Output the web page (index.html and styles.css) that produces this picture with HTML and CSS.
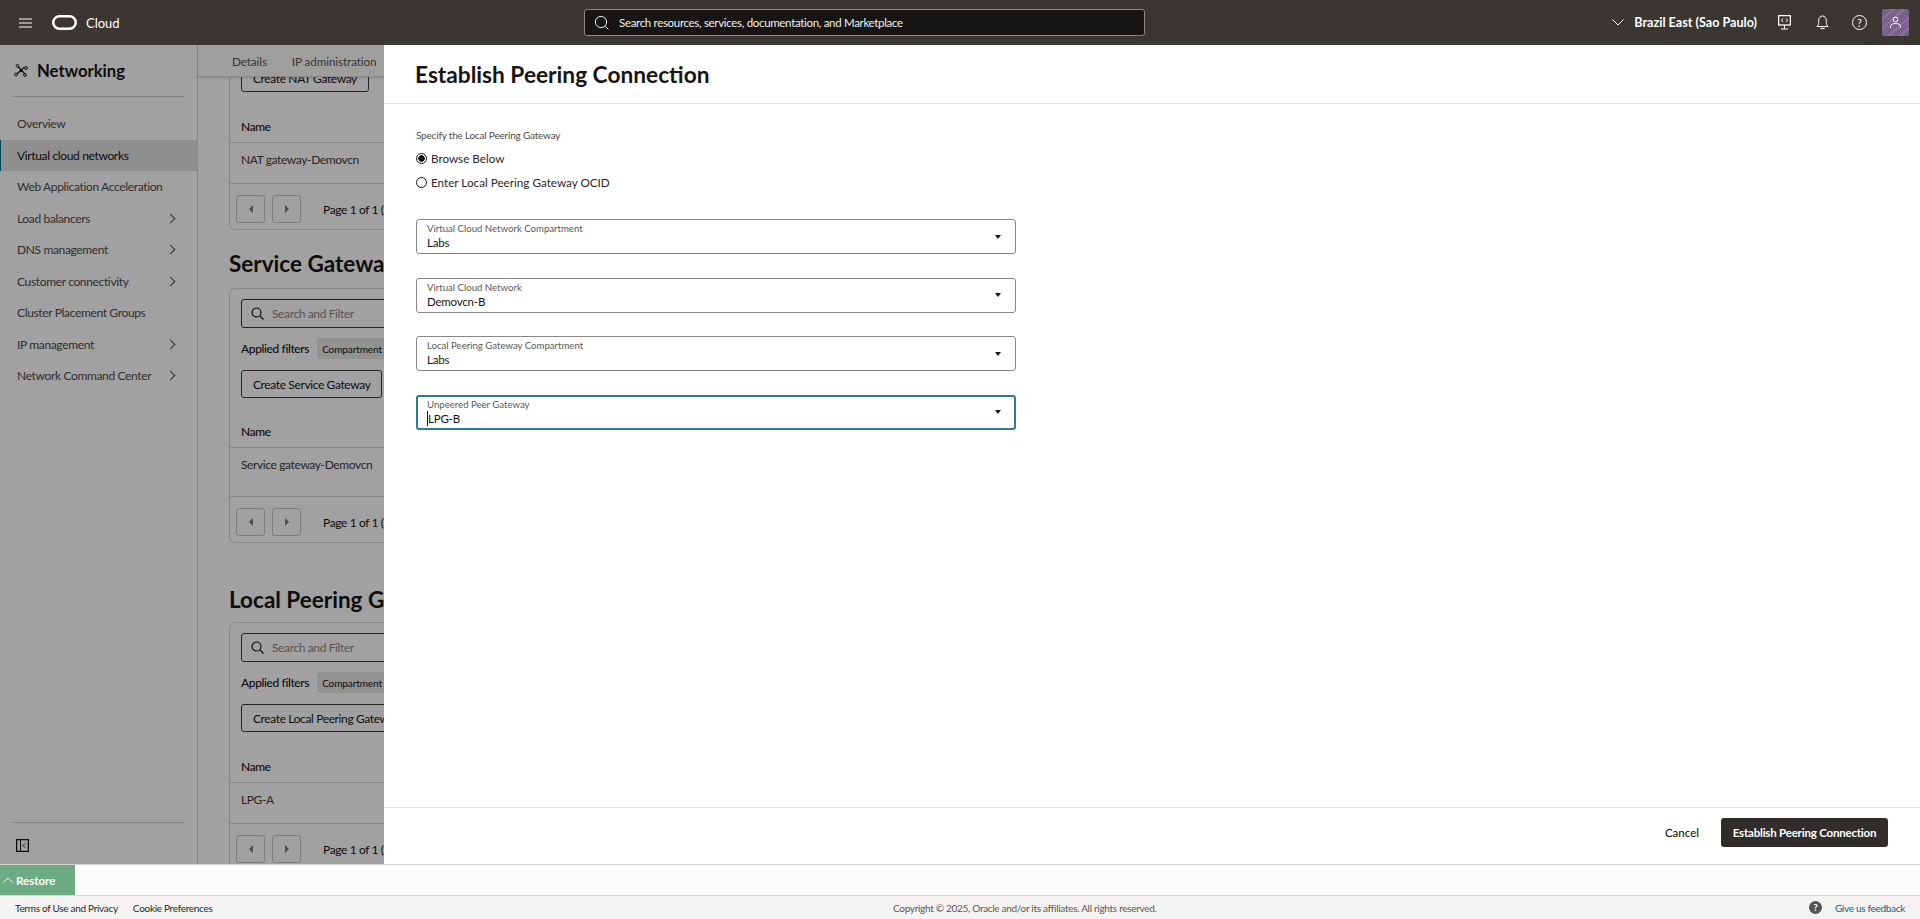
FILE: index.html
```html
<!DOCTYPE html>
<html lang="en">
  <head>
    <meta charset="UTF-8" />
    <meta name="viewport" content="width=device-width, initial-scale=1.0" />
    <title>Establish Peering Connection</title>
    <link rel="stylesheet" href="styles.css">
  </head>
  <body>

    <header class="topbar">
      <svg class="hamburger" width="13" height="10" viewBox="0 0 13 10"><path d="M0 1h13M0 5h13M0 9h13" stroke="#fff" stroke-width="1.2"/></svg>
      <svg class="logo" width="25" height="15" viewBox="0 0 25 15"><rect x="1.25" y="1.25" width="22.5" height="12.5" rx="6.25" fill="none" stroke="#fff" stroke-width="2.5"/></svg>
      <span class="cloud">Cloud</span>
      <div class="global-search">
        <svg width="16" height="16" viewBox="0 0 16 16"><circle cx="7" cy="7" r="5.6" fill="none" stroke="#e8e8e8" stroke-width="1"/><path d="M11 11l3.5 3.5" stroke="#e8e8e8" stroke-width="1"/></svg>
        <span>Search resources, services, documentation, and Marketplace</span>
      </div>
      <div class="top-right">
        <svg class="region-arrow" width="12" height="7" viewBox="0 0 12 7"><path d="M0.5 0.5L6 6l5.500-5.500" fill="none" stroke="#fff" stroke-width="1"/></svg>
        <span class="region">Brazil East (Sao Paulo)</span>
        <svg class="top-icon-cloudshell" width="13" height="15" viewBox="0 0 13 15"><rect x="0.6" y="0.6" width="11.800" height="9.400" fill="none" stroke="#fff" stroke-width="1.300"/><path d="M5 3.500L3.500 5.200 5 7M8 3.500l1.500 1.700L8 7M6.500 10v3.500M3 14h7" fill="none" stroke="#fff"/></svg>
        <svg class="top-icon-bell" width="13" height="15" viewBox="0 0 13 15"><path d="M0.8 11.5h11.4c-1.4-1-1.9-2.2-1.9-4.2V5.4C10.3 3 8.6 1 6.5 1S2.7 3 2.7 5.4v1.9c0 2-.5 3.200-1.900 4.200z" fill="none" stroke="#fff"/><path d="M4.500 13.500h4" stroke="#fff" stroke-width="1.300"/></svg>
        <span class="top-help">?</span>
        <div class="avatar">
          <svg width="27" height="27" viewBox="0 0 27 27">
            <path d="M-2 12L14-2M-2 22L24-2M4 29L29 7M16 29L29 17" stroke="#8c749f" stroke-width="2"/>
            <circle cx="13.500" cy="10.500" r="2.400" fill="none" stroke="#fff"/>
            <path d="M8.500 19v-1.500c0-2 2-3 5-3s5 1 5 3V19" fill="none" stroke="#fff"/>
          </svg>
        </div>
      </div>
    </header>

    <div class="app">
      <aside class="sidebar">
        <div class="sidebar-head">
          <svg width="14" height="13" viewBox="0 0 14 13"><path d="M4 2.500l7.500 8M10.500 3L3 10" stroke="#161513" stroke-width="1.100"/><circle cx="7" cy="6.500" r="1.600" fill="#161513"/><circle cx="3.500" cy="1.800" r="1.400" fill="#fff" stroke="#161513"/><circle cx="12" cy="4" r="1.400" fill="#fff" stroke="#161513"/><circle cx="2" cy="10.500" r="1.400" fill="#fff" stroke="#161513"/><circle cx="11" cy="11" r="1.400" fill="#fff" stroke="#161513"/></svg>
          <span>Networking</span>
        </div>
        <nav class="side-nav">
          <a class="side-item">Overview</a>
          <a class="side-item selected">Virtual cloud networks</a>
          <a class="side-item">Web Application Acceleration</a>
          <a class="side-item">Load balancers<i class="chev"></i></a>
          <a class="side-item">DNS management<i class="chev"></i></a>
          <a class="side-item">Customer connectivity<i class="chev"></i></a>
          <a class="side-item">Cluster Placement Groups</a>
          <a class="side-item">IP management<i class="chev"></i></a>
          <a class="side-item">Network Command Center<i class="chev"></i></a>
        </nav>
        <div class="side-bottom">
          <svg width="13" height="13" viewBox="0 0 13 13"><rect x="0.600" y="0.600" width="11.800" height="11.800" fill="none" stroke="#161513" stroke-width="1.300"/><path d="M4.500 0.500v12" stroke="#161513"/><path d="M9 4.500L7 6.500l2 2" fill="none" stroke="#161513"/></svg>
        </div>
      </aside>

      <main class="content">
        <div class="tabs">
          <span>Details</span>
          <span>IP administration</span>
        </div>
        <div class="scroller">
          <div class="scrolled">
            <section class="card card-cut">
              <button class="btn">Create NAT Gateway</button>
              <div class="table-head">Name</div>
              <div class="table-row">NAT gateway-Demovcn</div>
              <div class="pager">
                <span class="page-btn"><i class="tri-left"></i></span>
                <span class="page-btn"><i class="tri-right"></i></span>
                <span class="page-text">Page 1 of 1 (1 of 1 items)</span>
              </div>
            </section>

            <h2 class="section-title title-service">Service Gateways</h2>
            <section class="card">
              <div class="filter-box">
                <svg width="13" height="13" viewBox="0 0 13 13"><circle cx="5.500" cy="5.500" r="4.500" fill="none" stroke="#161513" stroke-width="1.200"/><path d="M9 9l3.500 3.500" stroke="#161513" stroke-width="1.200"/></svg>
                <span>Search and Filter</span>
              </div>
              <div class="applied"><b>Applied filters</b><span class="chip">Compartment <u>Labs</u></span></div>
              <button class="btn">Create Service Gateway</button>
              <div class="table-head">Name</div>
              <div class="table-row tall">Service gateway-Demovcn</div>
              <div class="pager">
                <span class="page-btn"><i class="tri-left"></i></span>
                <span class="page-btn"><i class="tri-right"></i></span>
                <span class="page-text">Page 1 of 1 (1 of 1 items)</span>
              </div>
            </section>

            <h2 class="section-title title-local">Local Peering Gateways</h2>
            <section class="card">
              <div class="filter-box">
                <svg width="13" height="13" viewBox="0 0 13 13"><circle cx="5.500" cy="5.500" r="4.500" fill="none" stroke="#161513" stroke-width="1.200"/><path d="M9 9l3.500 3.500" stroke="#161513" stroke-width="1.200"/></svg>
                <span>Search and Filter</span>
              </div>
              <div class="applied"><b>Applied filters</b><span class="chip">Compartment <u>Labs</u></span></div>
              <button class="btn">Create Local Peering Gateway</button>
              <div class="table-head">Name</div>
              <div class="table-row">LPG-A</div>
              <div class="pager">
                <span class="page-btn"><i class="tri-left"></i></span>
                <span class="page-btn"><i class="tri-right"></i></span>
                <span class="page-text">Page 1 of 1 (1 of 1 items)</span>
              </div>
            </section>
          </div>
        </div>
      </main>

      <div class="scrim"></div>

      <div class="panel">
        <div class="panel-head"><h1>Establish Peering Connection</h1></div>
        <div class="panel-body">
          <p class="group-label">Specify the Local Peering Gateway</p>
          <label class="radio-row"><i class="radio checked"></i>Browse Below</label>
          <label class="radio-row"><i class="radio"></i>Enter Local Peering Gateway OCID</label>

          <div class="field first">
            <div class="field-text"><small>Virtual Cloud Network Compartment</small><span>Labs</span></div>
            <i class="caret"></i>
          </div>
          <div class="field">
            <div class="field-text"><small>Virtual Cloud Network</small><span>Demovcn-B</span></div>
            <i class="caret"></i>
          </div>
          <div class="field">
            <div class="field-text"><small>Local Peering Gateway Compartment</small><span>Labs</span></div>
            <i class="caret"></i>
          </div>
          <div class="field focused">
            <div class="field-text"><small>Unpeered Peer Gateway</small><span class="with-cursor">LPG-B</span></div>
            <i class="caret"></i>
          </div>
        </div>
        <div class="panel-foot">
          <a class="cancel">Cancel</a>
          <button class="btn-primary">Establish Peering Connection</button>
        </div>
      </div>
    </div>

    <div class="restore-bar">
      <div class="restore">
        <svg width="10" height="6" viewBox="0 0 10 6"><path d="M0.500 5.500L5 1l4.500 4.500" fill="none" stroke="#fff" stroke-width="1"/></svg>
        <span>Restore</span>
      </div>
    </div>

    <footer class="footer">
      <div class="foot-links"><a>Terms of Use and Privacy</a><a>Cookie Preferences</a></div>
      <div class="foot-copy">Copyright © 2025, Oracle and/or its affiliates. All rights reserved.</div>
      <div class="foot-right"><span class="foot-help">?</span><a>Give us feedback</a></div>
    </footer>

  </body>
</html>
```
FILE: styles.css
```css
* {
  box-sizing: border-box;
}

body {
  margin: 0;
  height: 100vh;
  display: flex;
  flex-direction: column;
  overflow: hidden;
  font-family: Lato, "Open Sans", Arial, sans-serif;
  color: #161513;
  background: #fff;
}

/* top bar */
.topbar {
  height: 45px;
  flex: none;
  display: flex;
  align-items: center;
  position: relative;
  background: #3a3632;
  color: #fff;
}
.hamburger {
  margin-left: 19px;
}
.logo {
  margin-left: 20px;
}
.cloud {
  margin-left: 9px;
  font-size: 13px;
}
.global-search {
  position: absolute;
  left: 584px;
  top: 9px;
  width: 561px;
  height: 27px;
  display: flex;
  align-items: center;
  gap: 9px;
  padding-left: 9px;
  background: #161513;
  border: 1px solid #8a8986;
  border-radius: 3px;
  font-size: 11.5px;
  letter-spacing: -0.32px;
  color: #f0f0f0;
}
.top-right {
  margin-left: auto;
  display: flex;
  align-items: center;
  padding-right: 11px;
}
.region {
  margin-left: 10px;
  font-size: 12.6px;
  font-weight: 700;
}
.top-icon-cloudshell {
  margin-left: 21px;
}
.top-icon-bell {
  margin-left: 25px;
}
.top-help {
  margin-left: 23px;
  width: 15px;
  height: 15px;
  border: 1px solid #fff;
  border-radius: 50%;
  font-size: 11px;
  line-height: 13px;
  text-align: center;
}
.avatar {
  margin-left: 15px;
  width: 27px;
  height: 27px;
  border-radius: 2px;
  overflow: hidden;
  background: #7a6189;
}
.avatar svg {
  display: block;
}

/* page behind the panel */
.app {
  flex: 1;
  min-height: 0;
  display: flex;
  position: relative;
  overflow: hidden;
}
.sidebar {
  width: 198px;
  flex: none;
  display: flex;
  flex-direction: column;
  background: #fff;
  border-right: 1px solid #dcdbd9;
}
.sidebar-head {
  height: 52px;
  margin: 0 13px;
  padding-left: 1px;
  display: flex;
  align-items: center;
  gap: 9px;
  border-bottom: 1px solid #d0cfcd;
  font-size: 16.7px;
  font-weight: 700;
}
.side-nav {
  padding-top: 11px;
  font-size: 12px;
  letter-spacing: -0.35px;
  color: #4f4c49;
}
.side-item {
  height: 31.5px;
  display: flex;
  align-items: center;
  justify-content: space-between;
  padding: 0 23px 0 17px;
  white-space: nowrap;
}
.side-item.selected {
  color: #161513;
  background: #e4e3e2;
  box-shadow: inset 1px 0 0 #006b8f;
}
.chev {
  width: 7px;
  height: 7px;
  border-top: 1.2px solid #4f4c49;
  border-right: 1.2px solid #4f4c49;
  transform: rotate(45deg);
}
.side-bottom {
  margin: auto 13px 0;
  height: 42px;
  padding: 16px 0 0 3px;
  border-top: 1px solid #d0cfcd;
}
.side-bottom svg {
  display: block;
}

.content {
  flex: 1;
  min-width: 0;
  display: flex;
  flex-direction: column;
}
.tabs {
  height: 32px;
  flex: none;
  display: flex;
  gap: 25px;
  align-items: center;
  padding: 0 0 0 34px;
  font-size: 11.7px;
  letter-spacing: -0.1px;
  color: #5b5855;
  background: #fbfaf9;
  border-bottom: 1px solid #dcdbd9;
  box-shadow: 0 1px 3px rgba(0, 0, 0, 0.15);
  position: relative;
}
.scroller {
  flex: 1;
  overflow: hidden;
  padding-left: 31px;
  font-size: 12px;
  letter-spacing: -0.38px;
}
.scrolled {
  margin-top: -13px;
  width: 800px;
}
.card {
  border: 1px solid #d9d8d6;
  border-radius: 6px;
  padding-top: 10px;
}
.card-cut {
  border-top: 0;
  padding-top: 0;
  border-radius: 0 0 6px 6px;
}
.section-title {
  height: 30px;
  margin: 19px 0 9px;
  font-size: 22.5px;
  line-height: 30px;
  font-weight: 700;
  letter-spacing: 0;
}
.title-local {
  margin: 42px 0 7px;
}
.btn {
  display: block;
  margin-left: 11px;
  height: 28px;
  padding: 0 11px;
  font: inherit;
  letter-spacing: inherit;
  color: #161513;
  background: transparent;
  border: 1px solid #3f3c39;
  border-radius: 3px;
}
.filter-box {
  height: 29px;
  margin-left: 11px;
  display: flex;
  align-items: center;
  gap: 8px;
  padding-left: 9px;
  border: 1px solid #3f3c39;
  border-radius: 3px;
  color: #8a8886;
}
.applied {
  height: 21px;
  margin: 10px 0 11px 11px;
  display: flex;
  align-items: center;
  gap: 8px;
}
.applied b {
  font-weight: 500;
}
.chip {
  height: 21px;
  padding: 0 5px;
  display: flex;
  align-items: center;
  gap: 3px;
  font-size: 10px;
  letter-spacing: -0.1px;
  background: #e8e7e6;
  border-radius: 4px;
}
.table-head {
  height: 50px;
  padding: 25px 0 0 11px;
  line-height: 18px;
  font-weight: 500;
  border-bottom: 1px solid #d9d8d6;
}
.card-cut .table-head {
  height: 51px;
  padding-top: 26px;
}
.title-local + .card .table-head {
  height: 51px;
  padding-top: 26px;
}
.table-row {
  height: 41px;
  padding: 8px 0 0 11px;
  line-height: 18px;
  color: #3f3c39;
  border-bottom: 1px solid #d9d8d6;
}
.table-row.tall {
  height: 49px;
}
.pager {
  height: 45px;
  padding: 11px 0 0 6px;
  display: flex;
  align-items: flex-start;
  gap: 7px;
}
.page-btn {
  width: 29px;
  height: 28px;
  display: flex;
  align-items: center;
  justify-content: center;
  border: 1px solid #c9c8c6;
  border-radius: 3px;
}
.tri-left,
.tri-right {
  border-top: 4px solid transparent;
  border-bottom: 4px solid transparent;
}
.tri-left {
  border-right: 4px solid #7d7b79;
}
.tri-right {
  border-left: 4px solid #7d7b79;
}
.page-text {
  margin-left: 15px;
  line-height: 30px;
  white-space: nowrap;
}

/* dim layer and slide-in panel */
.scrim {
  position: absolute;
  inset: 0;
  background: rgba(0, 0, 0, 0.37);
}
.panel {
  position: absolute;
  left: 384px;
  top: 0;
  right: 0;
  bottom: 0;
  display: flex;
  flex-direction: column;
  background: #fff;
}
.panel-head {
  height: 59px;
  flex: none;
  padding-left: 31px;
  border-bottom: 1px solid #e4e3e2;
}
.panel-head h1 {
  margin: 0;
  font-size: 22.7px;
  line-height: 59px;
  font-weight: 700;
}
.panel-body {
  flex: 1;
  padding: 24px 0 0 32px;
}
.group-label {
  margin: 0;
  font-size: 10px;
  letter-spacing: -0.2px;
  line-height: 14px;
  color: #4f4c49;
}
.radio-row {
  display: flex;
  align-items: center;
  gap: 4px;
  height: 24px;
  font-size: 11.7px;
  color: #2b2926;
}
.group-label + .radio-row {
  margin-top: 4px;
}
.radio {
  width: 11px;
  height: 11px;
  border: 1px solid #161513;
  border-radius: 50%;
}
.radio.checked {
  background: radial-gradient(circle, #161513 0 3px, #fff 3.5px);
}
.field {
  width: 600px;
  height: 35px;
  margin-bottom: 23.67px;
  display: flex;
  align-items: center;
  justify-content: space-between;
  padding: 0 14px 0 10px;
  border: 1px solid #8a8886;
  border-radius: 3px;
}
.field.first {
  margin-top: 25px;
}
.field.focused {
  border: 2px solid #2e7b96;
  padding: 0 13px 0 9px;
}
.field-text {
  display: flex;
  flex-direction: column;
}
.field-text small {
  font-size: 9.6px;
  line-height: 12px;
  color: #5b5855;
}
.field-text span {
  font-size: 11.5px;
  letter-spacing: -0.2px;
  line-height: 15px;
}
.with-cursor {
  border-left: 1px solid #161513;
  margin-left: 0;
}
.caret {
  border-left: 3.5px solid transparent;
  border-right: 3.5px solid transparent;
  border-top: 4px solid #161513;
}
.panel-foot {
  height: 57px;
  flex: none;
  display: flex;
  align-items: center;
  justify-content: flex-end;
  gap: 22px;
  padding: 0 32px 7px 0;
  border-top: 1px solid #e4e3e2;
}
.cancel {
  font-size: 11.5px;
  font-weight: 500;
}
.btn-primary {
  width: 167px;
  height: 29px;
  padding: 0;
  font: inherit;
  font-size: 11.5px;
  letter-spacing: -0.2px;
  font-weight: 700;
  color: #fff;
  background: #312d2a;
  border: 0;
  border-radius: 3px;
}

/* bottom bars */
.restore-bar {
  height: 31px;
  flex: none;
  background: #fbfbfa;
  border-top: 1px solid #d0cfcd;
}
.restore {
  width: 75px;
  height: 30px;
  display: flex;
  align-items: center;
  gap: 3px;
  padding-left: 3px;
  background: #6dab83;
  color: #fff;
  font-size: 11.5px;
  font-weight: 700;
}
.footer {
  height: 24px;
  flex: none;
  display: flex;
  align-items: center;
  position: relative;
  padding: 0 15px;
  font-size: 10px;
  letter-spacing: -0.3px;
  color: #2b2926;
  background: #f4f3f1;
  border-top: 1px solid #d9d8d6;
}
.foot-links {
  display: flex;
  gap: 15px;
}
.foot-copy {
  position: absolute;
  left: 893px;
  color: #5b5855;
}
.foot-right {
  margin-left: auto;
  display: flex;
  align-items: center;
  gap: 13px;
  color: #00688c;
}
.foot-help {
  width: 13px;
  height: 13px;
  border-radius: 50%;
  background: #55524f;
  color: #fff;
  font-size: 10px;
  font-weight: 700;
  line-height: 13px;
  text-align: center;
}
```
